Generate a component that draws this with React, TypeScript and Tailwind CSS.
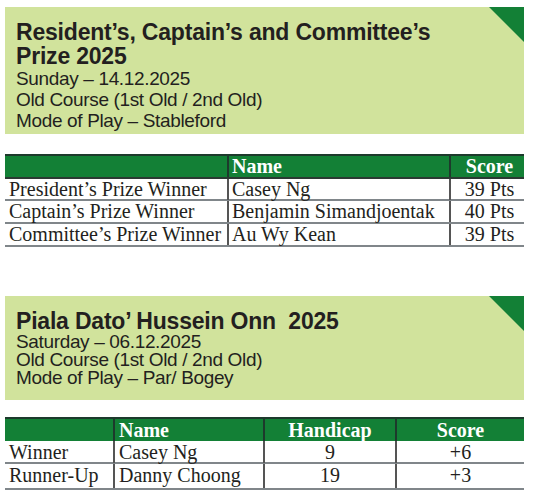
const sans = "font-['Liberation_Sans',Arial,sans-serif]";
const serif = "font-['Liberation_Serif','Times_New_Roman',serif]";

const Corner = () => (
  <svg className="absolute right-0 top-0" width="35" height="35" viewBox="0 0 35 35">
    <polygon points="0,0 35,0 35,35" fill="#138036" />
  </svg>
);

const Panel = ({
  title,
  lines,
  tight,
}: {
  title: string[];
  lines: string[];
  tight?: boolean;
}) => (
  <div className={`relative bg-[#d1e39c] pl-[11px] pt-[13px] text-[#231f20] ${sans} ${tight ? "pb-[13px]" : "pb-[3px]"}`}>
    <Corner />
    <div className="text-[23px] font-bold leading-[24px] tracking-[-0.2px] whitespace-pre">
      {title.map((t) => (
        <div key={t}>{t}</div>
      ))}
    </div>
    <div className={`text-[19px] tracking-[-0.35px] ${tight ? "leading-[18px]" : "leading-[21px]"}`}>
      {lines.map((l) => (
        <div key={l}>{l}</div>
      ))}
    </div>
  </div>
);

const prizeRows = [
  ["President’s Prize Winner", "Casey Ng", "39 Pts"],
  ["Captain’s Prize Winner", "Benjamin Simandjoentak", "40 Pts"],
  ["Committee’s Prize Winner", "Au Wy Kean", "39 Pts"],
];

const bogeyRows = [
  ["Winner", "Casey Ng", "9", "+6"],
  ["Runner-Up", "Danny Choong", "19", "+3"],
];

const App = () => {
  return (
    <div className="bg-white w-[536px] h-[502px] pt-[7px] pl-[5px] pr-[12px]">
      <Panel
        title={["Resident’s, Captain’s and Committee’s", "Prize 2025"]}
        lines={["Sunday – 14.12.2025", "Old Course (1st Old / 2nd Old)", "Mode of Play – Stableford"]}
      />

      {/* prize table */}
      <div className={`mt-[20px] text-[20px] text-[#231f20] ${serif}`}>
        <div className="grid grid-cols-[222px_222px_1fr] h-[23px] bg-[#138036] border-t-2 border-[#1d3a2c] font-bold text-white leading-[21px]">
          <div />
          <div className="border-l-2 border-[#1d3a2c] pl-[3px]">Name</div>
          <div className="border-l-2 border-[#1d3a2c] text-center pl-[4px]">Score</div>
        </div>
        {prizeRows.map((r, i) => (
          <div
            key={r[0]}
            className={`grid grid-cols-[222px_222px_1fr] border-b-2 leading-[21px] ${i === 0 ? "h-[24px] border-t-2 border-t-[#2b3a33]" : "h-[23px]"} border-b-[#80868a]`}
          >
            <div className="pl-[4px] whitespace-nowrap">{r[0]}</div>
            <div className="border-l-2 border-[#555] pl-[3px] whitespace-nowrap">{r[1]}</div>
            <div className="border-l-2 border-[#555] text-center pl-[4px]">{r[2]}</div>
          </div>
        ))}
      </div>

      <div className="mt-[49px]">
        <Panel
          tight
          title={["Piala Dato’ Hussein Onn  2025"]}
          lines={["Saturday – 06.12.2025", "Old Course (1st Old / 2nd Old)", "Mode of Play – Par/ Bogey"]}
        />
      </div>

      {/* par / bogey table */}
      <div className={`mt-[17px] text-[20px] text-[#231f20] ${serif}`}>
        <div className="grid grid-cols-[108px_150px_132px_1fr] h-[24px] bg-[#138036] border-t-2 border-[#1d3a2c] font-bold text-white leading-[22px]">
          <div />
          <div className="border-l-2 border-[#1d3a2c] pl-[4px]">Name</div>
          <div className="border-l-2 border-[#1d3a2c] text-center">Handicap</div>
          <div className="border-l-2 border-[#1d3a2c] text-center">Score</div>
        </div>
        {bogeyRows.map((r, i) => (
          <div
            key={r[0]}
            className={`grid grid-cols-[108px_150px_132px_1fr] border-b-2 border-b-[#80868a] leading-[22px] ${i === 0 ? "h-[23px]" : "h-[26px]"}`}
          >
            <div className="pl-[4px]">{r[0]}</div>
            <div className="border-l-2 border-[#555] pl-[4px]">{r[1]}</div>
            <div className="border-l-2 border-[#555] text-center">{r[2]}</div>
            <div className="border-l-2 border-[#555] text-center">{r[3]}</div>
          </div>
        ))}
      </div>
    </div>
  );
};

export default App;
